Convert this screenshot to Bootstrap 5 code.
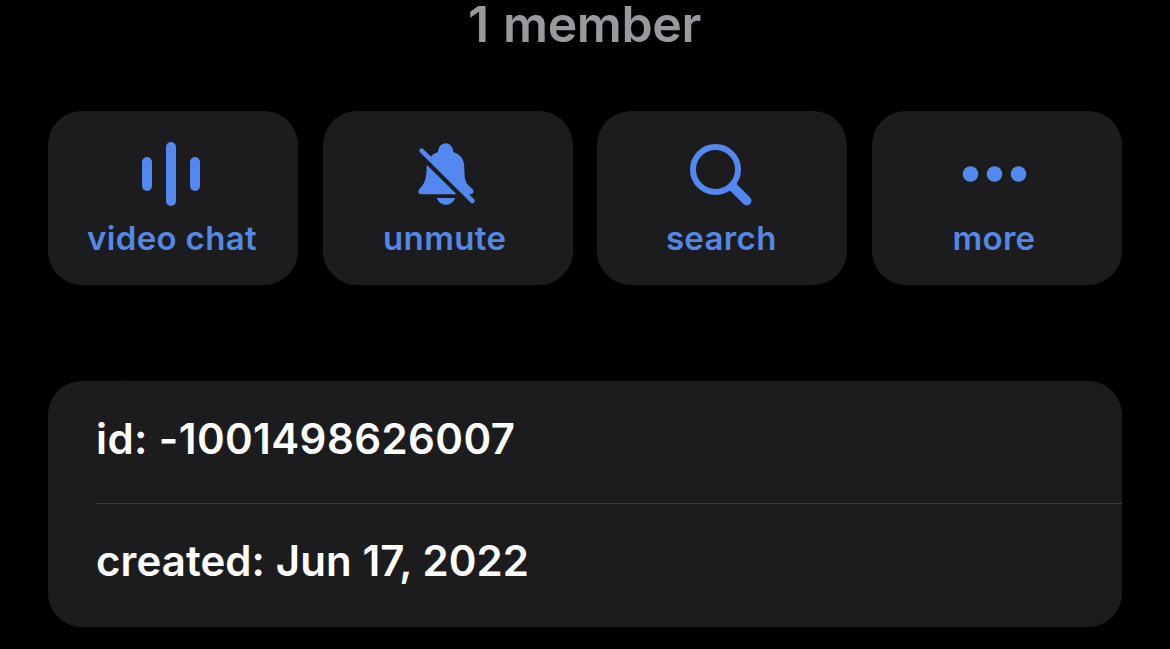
<!DOCTYPE html>
<html lang="en">

<head>
    <meta charset="UTF-8">
    <meta name="viewport" content="width=device-width, initial-scale=1">
    <title>Group info</title>
    <link href="https://cdn.jsdelivr.net/npm/bootstrap@5.3.0/dist/css/bootstrap.min.css" rel="stylesheet">
    <style>
        body {
            font-family: Inter, "Liberation Sans", sans-serif;
            background: #000;
        }

        .group-page {
            padding: 0 48px;
        }

        .member-count {
            color: #98989e;
            font-size: 50px;
            font-weight: 600;
            line-height: 48px;
            letter-spacing: -0.4px;
            word-spacing: 2px;
            padding-right: 1px;
            margin-bottom: 63px;
        }

        .action-row {
            gap: 24.6px;
            margin-bottom: 96px;
        }

        .action-btn {
            --bs-btn-border-width: 0;
            --bs-btn-bg: #1c1c1e;
            --bs-btn-hover-bg: #2c2c2e;
            --bs-btn-active-bg: #2c2c2e;
            --bs-btn-color: #5587e5;
            --bs-btn-hover-color: #5587e5;
            --bs-btn-active-color: #5587e5;
            height: 174px;
            padding: 24px 0 0;
            border-radius: 34px;
            font-size: 33px;
            font-weight: 560;
            line-height: 46px;
            letter-spacing: 0.35px;
        }

        .action-btn svg {
            width: 80px;
            height: 80px;
            fill: #5288ef;
            stroke: #5288ef;
            stroke-width: 0;
            stroke-linecap: round;
        }

        .action-btn span {
            padding-right: 6px;
        }

        .action-btn:nth-child(odd) span {
            padding-right: 2px;
        }

        .info-list {
            --bs-list-group-bg: #1c1c1e;
            --bs-list-group-color: #fff;
            height: 246px;
            border-radius: 34px;
            background: #1c1c1e;
            padding-left: 48px;
            overflow: hidden;
        }

        .info-item {
            height: 122px;
            padding: 0 0 8px;
            font-size: 42px;
            font-weight: 560;
            letter-spacing: 0.4px;
            white-space: nowrap;
        }

        .info-item + .info-item {
            height: 124px;
            padding-bottom: 10px;
            letter-spacing: 0.08px;
            border-top: 1px solid #3d3d40 !important;
        }
    </style>
</head>

<body>
    <main class="group-page">
        <h1 class="member-count text-center">1 member</h1>

        <div class="action-row d-flex">
            <button type="button" class="btn action-btn flex-fill w-100 d-flex flex-column align-items-center">
                <svg viewBox="0 0 80 80" aria-hidden="true">
                    <rect x="9" y="22" width="10" height="34" rx="5" />
                    <rect x="33" y="7" width="10" height="64" rx="5" />
                    <rect x="57" y="22" width="10" height="34" rx="5" />
                </svg>
                <span>video chat</span>
            </button>
            <button type="button" class="btn action-btn flex-fill w-100 d-flex flex-column align-items-center">
                <svg viewBox="0 0 80 80" aria-hidden="true">
                    <!-- upper right half of the bell, with the knob -->
                    <path d="M21.5 22.5Q25 18.5 30 17C30.3 12 33.3 8.3 37.7 8.3S45 12 45.4 17C52 19 56 24 56.2 31C56.5 40 56.5 46 60 50C62.5 52.7 65.5 54 65.5 56.6Q65.5 59.3 61.5 59.3H58Z" />
                    <!-- lower left half -->
                    <path d="M18.7 29.8L48.6 59.3H13.5Q10.3 59.3 10.3 56.8C10.3 54.5 12.5 53 14 51C18.7 45 18.5 38 18.7 29.8Z" />
                    <path d="M28.7 63H47.2C45.5 67.3 42 69.8 38 69.8S30.3 67.3 28.7 63Z" />
                    <path d="M13.6 15.7L64.5 66" stroke-width="4.6" />
                </svg>
                <span>unmute</span>
            </button>
            <button type="button" class="btn action-btn flex-fill w-100 d-flex flex-column align-items-center">
                <svg viewBox="0 0 80 80" aria-hidden="true">
                    <circle cx="33.5" cy="34.5" r="22.5" fill="none" stroke-width="6" />
                    <path d="M51 52L64.8 65.8" stroke-width="9.4" />
                </svg>
                <span>search</span>
            </button>
            <button type="button" class="btn action-btn flex-fill w-100 d-flex flex-column align-items-center">
                <svg viewBox="0 0 80 80" aria-hidden="true">
                    <circle cx="13.5" cy="39" r="7.8" />
                    <circle cx="37.5" cy="39" r="7.8" />
                    <circle cx="61.5" cy="39" r="7.8" />
                </svg>
                <span>more</span>
            </button>
        </div>

        <ul class="list-group list-group-flush info-list">
            <li class="list-group-item info-item d-flex align-items-center border-0">id: -1001498626007</li>
            <li class="list-group-item info-item d-flex align-items-center border-0">created: Jun 17, 2022</li>
        </ul>
    </main>

    <script src="https://cdn.jsdelivr.net/npm/bootstrap@5.3.0/dist/js/bootstrap.bundle.min.js"></script>
</body>

</html>
